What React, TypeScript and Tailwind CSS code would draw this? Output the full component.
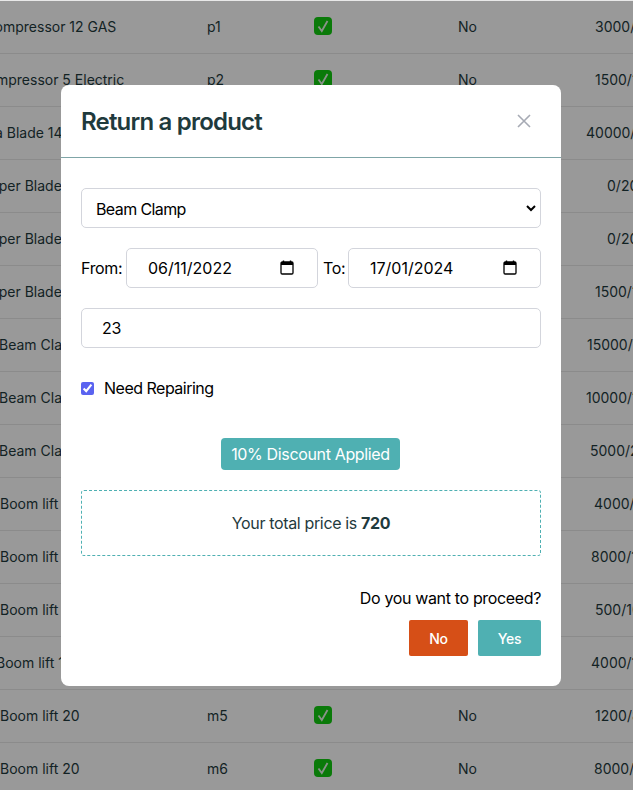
const rows = [
  { name: "Air Compressor 12 GAS", nameClass: "ml-[-38px]", code: "p1", price: "3000/1000", priceClass: "ml-[37px]" },
  { name: "Air Compressor 5 Electric", nameClass: "ml-[-45px]", code: "p2", price: "1500/1000", priceClass: "ml-[37px]" },
  { name: "Cutting Saga Blade 14", nameClass: "ml-[-82px]", code: "p3", price: "40000/2000", priceClass: "ml-[28px]" },
  { name: "Concrete Scraper Blade", nameClass: "ml-[-96px]", code: "p4", price: "0/2000", priceClass: "ml-[49px]" },
  { name: "Concrete Scraper Blade", nameClass: "ml-[-96px]", code: "p5", price: "0/2000", priceClass: "ml-[49px]" },
  { name: "Concrete Scraper Blade", nameClass: "ml-[-96px]", code: "p6", price: "1500/1000", priceClass: "ml-[37px]" },
  { name: "Beam Clamp", nameClass: "ml-[-1px]", code: "b1", price: "15000/1000", priceClass: "ml-[29px]" },
  { name: "Beam Clamp", nameClass: "ml-[-1px]", code: "b2", price: "10000/1000", priceClass: "ml-[28px]" },
  { name: "Beam Clamp", nameClass: "ml-[-1px]", code: "b3", price: "5000/2000", priceClass: "ml-[32px]" },
  { name: "Boom lift 20", nameClass: "ml-[0px]", code: "m1", price: "4000/1000", priceClass: "ml-[36px]" },
  { name: "Boom lift 20", nameClass: "ml-[0px]", code: "m2", price: "8000/1000", priceClass: "ml-[33px]" },
  { name: "Boom lift 20", nameClass: "ml-[0px]", code: "m3", price: "500/1000", priceClass: "ml-[37px]" },
  { name: "Boom lift 12", nameClass: "ml-[-4px]", code: "m4", price: "4000/1000", priceClass: "ml-[33px]" },
  { name: "Boom lift 20", nameClass: "ml-[0px]", code: "m5", price: "1200/800", priceClass: "ml-[37px]" },
  { name: "Boom lift 20", nameClass: "ml-[0px]", code: "m6", price: "8000/1000", priceClass: "ml-[36px]" },
]

const inputStyle = "w-full h-10 border border-[#d3d5dc] rounded-[5px] bg-white text-black outline-none"

const CheckEmoji = () => (
  <svg width="18" height="18" viewBox="0 0 18 18" className="mb-[1px]">
    <rect width="18" height="18" rx="4" fill="#12cb10" />
    <path d="M4.5 9.5 L7.8 14 L13.5 4" fill="none" stroke="#e4f4e4" strokeWidth="1.8" />
  </svg>
)

const CalendarIcon = () => (
  <svg width="14" height="15" viewBox="0 0 14 15" className="shrink-0">
    <path d="M3.5 0.5v2M10.5 0.5v2" stroke="#000" strokeWidth="1.4" />
    <rect x="1" y="2" width="12" height="12" rx="1.2" fill="none" stroke="#000" strokeWidth="1.3" />
    <rect x="1" y="2" width="12" height="3" fill="#000" />
  </svg>
)

const DateField = ({ value, className }: { value: string; className: string }) => (
  <div className={`relative ${className}`}>
    <input type="text" readOnly value={value} className={`${inputStyle} pl-[21px] pr-8 tracking-[0px]`} />
    <div className="absolute right-[24px] top-[12px]">
      <CalendarIcon />
    </div>
  </div>
)

export default function App() {
  return (
    <div className="relative h-[790px] w-[633px] overflow-hidden border-t border-[#e8e8e8] bg-white text-[14px] text-[#1f3a3d] font-['Inter',sans-serif]">
      {rows.map((row) => (
        <div key={row.code} className="flex h-[53px] items-center border-b border-[#e8e8e8] pb-[2px] whitespace-nowrap">
          <div className="w-[200px] shrink-0">
            <div className={row.nameClass}>{row.name}</div>
          </div>
          <div className="w-[114px] shrink-0 pl-[7px]">{row.code}</div>
          <div className="flex w-[144px] shrink-0">
            <CheckEmoji />
          </div>
          <div className="w-[100px] shrink-0">No</div>
          <div className="shrink-0">
            <div className={row.priceClass}>{row.price}</div>
          </div>
        </div>
      ))}

      <div className="absolute inset-0 bg-black/40">
        <div className="ml-[61px] mt-[84px] w-[500px] rounded-lg bg-white">
          <div className="flex h-[73px] items-center justify-between border-b border-[#7fa5a7] px-5">
            <h2 className="mt-px text-[24px] font-semibold leading-8 tracking-[-0.8px] text-[#1f3a3d]">Return a product</h2>
            <svg width="14" height="14" viewBox="0 0 14 14" className="mr-[10px]">
              <path d="M1 1 L13 13 M13 1 L1 13" stroke="#a6aab4" strokeWidth="1.6" />
            </svg>
          </div>

          <div className="flex flex-col px-5 pt-[30px] pb-[30px] text-[16px] tracking-[-0.35px] text-black">
            <div className="relative">
              <select className={`${inputStyle} appearance-none pl-[14px] pt-px tracking-[-0.6px]`} defaultValue="Beam Clamp">
                <option>Beam Clamp</option>
              </select>
              <svg width="10" height="7" viewBox="0 0 10 7" className="absolute right-[5px] top-[17px]">
                <path d="M1 1 L5 5 L9 1" fill="none" stroke="#000" strokeWidth="2" />
              </svg>
            </div>

            <div className="mt-5 flex items-center">
              <label className="w-[45px] shrink-0">From:</label>
              <DateField value="06/11/2022" className="w-[192px] shrink-0" />
              <label className="ml-[5px] w-[25px] shrink-0">To:</label>
              <DateField value="17/01/2024" className="w-[193px] shrink-0" />
            </div>

            <input type="text" readOnly value="23" className={`${inputStyle} mt-5 pl-5`} />

            <label className="mt-[28px] flex h-6 items-center">
              <input type="checkbox" readOnly checked className="h-[13px] w-[13px] accent-[#5a63f0]" />
              <span className="ml-[10px] tracking-[-0.5px]">Need Repairing</span>
            </label>

            <div className="mt-[38px] flex justify-center pr-px">
              <span className="flex h-8 w-[179px] items-center justify-center rounded bg-[#4fb0b2] text-white">
                10% Discount Applied
              </span>
            </div>

            <div className="mt-5 flex h-[66px] items-center justify-center rounded-[3px] border border-dashed border-[#4fb0b2] text-[#1f3a3d]">
              <span>
                Your total price is <b className="font-bold">720</b>
              </span>
            </div>

            <p className="mt-[30px] h-6 text-right leading-6">Do you want to proceed?</p>

            <div className="mt-[10px] flex justify-end gap-[10px] text-[14px] font-medium tracking-[-0.2px] text-white">
              <button className="h-9 w-[59px] rounded-[2px] bg-[#d64f17]">No</button>
              <button className="h-9 w-[63px] rounded-[2px] bg-[#4fb0b2]">Yes</button>
            </div>
          </div>
        </div>
      </div>
    </div>
  )
}
